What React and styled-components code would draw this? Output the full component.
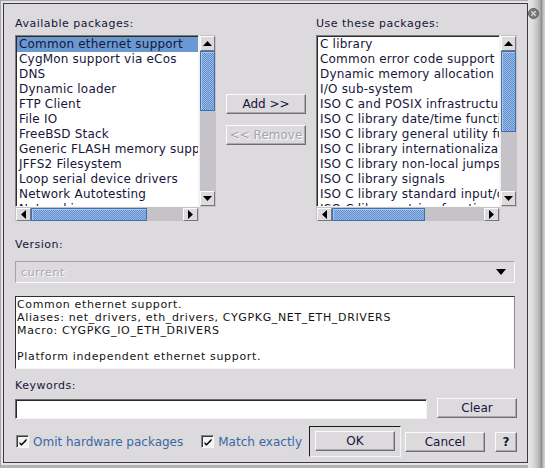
import React from 'react';
import styled, { createGlobalStyle } from 'styled-components';

const BG = '#dcdadd';
const INK = '#16163a';
const SANS = '"DejaVu Sans", "Noto Sans", sans-serif';

const GlobalStyle = createGlobalStyle`
  *, *::before, *::after { box-sizing: border-box; }
  html, body { margin: 0; padding: 0; background: ${BG}; }
  body { width: 545px; height: 468px; overflow: hidden; font-family: ${SANS}; }
`;

const Screen = styled.div`
  display: flex;
  width: 545px;
  height: 468px;
  background: ${BG};
`;

const Frame = styled.div`
  width: 528px;
  height: 468px;
  padding: 2px 0 2px 2px;
  border-top: 1px solid #a9a9ab;
  border-left: 1px solid #a9a9ab;
  border-bottom: 3px solid #b3b2b4;
  background: #e6e4e7;
`;

const Panel = styled.div`
  height: 100%;
  border: 1px solid #3c3c40;
  background: ${BG};
  padding: 13px 10px 0 11px;
  display: flex;
  flex-direction: column;
`;

const TitleStrip = styled.div`
  width: 17px;
  height: 468px;
  padding-top: 8px;
  display: flex;
  flex-direction: column;
  align-items: flex-start;
  background: linear-gradient(to right, #e6e6e6 0px, #dedede 4px, #c6c6c6 9px, #ababab 12px, #8f8f8f 13.5px, #bcbcbc 15px, #d8d8d8 17px);
`;

const TopGrid = styled.div`
  display: grid;
  grid-template-columns: 201px 100px 201px;
`;

const Column = styled.div`
  display: flex;
  flex-direction: column;
`;

const Label = styled.div`
  font-family: ${SANS};
  font-size: 11px;
  line-height: 13px;
  height: 13px;
  letter-spacing: 0.5px;
  color: ${INK};
  white-space: nowrap;
  margin-top: ${p => p.$mt || 0}px;
  margin-bottom: ${p => p.$mb || 0}px;
`;

const ListPanel = styled.div`
  display: grid;
  grid-template-columns: 184px 17px;
  grid-template-rows: 172px 14px;
`;

const ListBox = styled.div`
  background: #fff;
  border: 1px solid;
  border-color: #7d7d7f #f6f6f6 #f6f6f6 #7d7d7f;
  box-shadow: inset 1px 1px 0 #2c2c2c;
  padding: 1px 0 0 1px;
  overflow: hidden;
`;

const Row = styled.div`
  height: 15px;
  line-height: 15px;
  padding-left: 2px;
  font-family: ${SANS};
  font-size: 12px;
  letter-spacing: 0.2px;
  white-space: nowrap;
  overflow: hidden;
  color: ${INK};
  background: ${p => (p.$selected ? '#6a98d0' : 'transparent')};
`;

const VScroll = styled.div`
  display: flex;
  flex-direction: column;
  padding: 1px 1px 1px 0;
  background: #c5c3c7;
  border-left: 1px solid #f0eff1;
`;

const HScroll = styled.div`
  display: flex;
  padding: 1px 1px 0 1px;
  background: #c5c3c7;
`;

const Corner = styled.div`
  background: ${BG};
`;

const ArrowBtn = styled.div`
  flex: 0 0 15px;
  width: 15px;
  height: ${p => (p.$h ? `${p.$h}px` : '15px')};
  display: flex;
  align-items: center;
  justify-content: center;
  background: ${BG};
  border: 1px solid;
  border-color: #fbfbfb #77767a #77767a #fbfbfb;
`;

const Thumb = styled.div`
  flex: 0 0 ${p => p.$size}px;
  background: repeating-conic-gradient(#9bbbe6 0 25%, #5f8fcc 0 50%) 0 0 / 2px 2px;
  border: 1px solid #3f6fae;
  box-shadow: inset 1px 1px 0 #a9c5ec;
`;

const Trough = styled.div`
  flex: 1 1 auto;
`;

const Middle = styled.div`
  display: flex;
  flex-direction: column;
  align-items: center;
  padding-top: 77px;
  gap: 11px;
`;

const Button = styled.button`
  width: ${p => p.$w || 80}px;
  height: 20px;
  padding: 0;
  font-family: ${SANS};
  font-size: 12px;
  font-weight: ${p => (p.$bold ? 700 : 400)};
  color: ${INK};
  background: ${BG};
  border: 1px solid;
  border-color: #fbfbfb #6f6f71 #6f6f71 #fbfbfb;
  box-shadow: inset -1px -1px 0 #aaa9ac;
  cursor: default;
  &:disabled {
    color: #a6a5a8;
    text-shadow: 1px 1px 0 #ffffff;
  }
`;

const Combo = styled.div`
  width: 500px;
  height: 22px;
  margin-top: 10px;
  display: flex;
  align-items: center;
  justify-content: space-between;
  padding: 0 8px 0 5px;
  border: 1px solid;
  border-color: #a4a3a6 #fafafa #fafafa #a4a3a6;
  font-family: ${SANS};
  font-size: 11px;
  letter-spacing: 0.6px;
  color: #a9a8ab;
  text-shadow: 1px 1px 0 #ffffff;
`;

const Desc = styled.div`
  width: 500px;
  height: 73px;
  margin-top: 13px;
  background: #fff;
  border: 1px solid;
  border-color: #2e2e30 #8a898c #f4f4f4 #2e2e30;
  padding: 1px 1px 0;
  font-family: ${SANS};
  font-size: 11px;
  line-height: 13px;
  letter-spacing: 0.65px;
  color: #141414;
  white-space: pre-line;
`;

const InputRow = styled.div`
  display: flex;
  align-items: flex-start;
  gap: 10px;
  margin-top: 6px;
  height: 21px;
`;

const TextInput = styled.div`
  width: 412px;
  height: 20px;
  margin-top: 1px;
  background: #fff;
  border: 1px solid;
  border-color: #6a6a6c #f5f5f5 #f5f5f5 #6a6a6c;
  box-shadow: inset 1px 1px 0 #2a2a2a;
`;

const BottomRow = styled.div`
  display: flex;
  align-items: center;
  margin-top: 7px;
  height: 31px;
`;

const Checks = styled.div`
  display: flex;
  align-items: center;
  gap: 18px;
  margin-left: 1px;
`;

const CheckItem = styled.label`
  display: flex;
  align-items: center;
  gap: 4px;
  font-family: ${SANS};
  font-size: 12px;
  color: #3a68a5;
  white-space: nowrap;
`;

const Box = styled.span`
  width: 13px;
  height: 13px;
  display: flex;
  align-items: center;
  justify-content: center;
  background: #f3f2f4;
  border: 1px solid;
  border-color: #858487 #fbfbfb #fbfbfb #858487;
  box-shadow: inset 1px 1px 0 #3a3a3a;
`;

const Actions = styled.div`
  display: flex;
  align-items: center;
  margin-left: auto;
`;

const DefaultFrame = styled.div`
  width: 92px;
  height: 31px;
  padding: 4px 5px 5px;
  border: 1px solid;
  border-color: #1a1a1a #f6f6f6 #f6f6f6 #1a1a1a;
  display: flex;
  margin-right: 4px;
`;

const Gap = styled.div`
  width: ${p => p.$w}px;
`;

const Tri = ({ dir, w = 9, h = 5 }) => {
  const d = {
    up: `M0 ${h} L${w / 2} 0 L${w} ${h} Z`,
    down: `M0 0 L${w / 2} ${h} L${w} 0 Z`,
  }[dir];
  return (
    <svg width={w} height={h} viewBox={`0 0 ${w} ${h}`}>
      <path d={d} fill="#000" />
    </svg>
  );
};

const HTri = ({ dir }) => (
  <svg width="5" height="9" viewBox="0 0 5 9">
    <path d={dir === 'left' ? 'M5 0 L0 4.5 L5 9 Z' : 'M0 0 L5 4.5 L0 9 Z'} fill="#000" />
  </svg>
);

const CloseIcon = () => (
  <svg width="11" height="11" viewBox="0 0 11 11">
    <circle cx="5.5" cy="5.5" r="5" fill="#7a7a7c" stroke="#5c5c5e" strokeWidth="1" />
    <path d="M3.3 3.3 L7.7 7.7 M7.7 3.3 L3.3 7.7" stroke="#d4d4d6" strokeWidth="1.4" />
  </svg>
);

const CheckMark = () => (
  <svg width="8" height="8" viewBox="0 0 8 8">
    <path d="M0.5 4 L2.5 5.8 L7.5 0.5 L7.5 2.8 L2.5 7.8 L0.5 6 Z" fill="#000" />
  </svg>
);

const ScrolledList = ({ items, selected, vThumb, hThumb }) => (
  <ListPanel>
    <ListBox>
      {items.map((t, i) => (
        <Row key={t} $selected={i === selected}>{t}</Row>
      ))}
    </ListBox>
    <VScroll>
      <ArrowBtn><Tri dir="up" /></ArrowBtn>
      <Thumb $size={vThumb} />
      <Trough />
      <ArrowBtn><Tri dir="down" /></ArrowBtn>
    </VScroll>
    <HScroll>
      <ArrowBtn $h={13}><HTri dir="left" /></ArrowBtn>
      <Thumb $size={hThumb} />
      <Trough />
      <ArrowBtn $h={13}><HTri dir="right" /></ArrowBtn>
    </HScroll>
    <Corner />
  </ListPanel>
);

const available = [
  'Common ethernet support',
  'CygMon support via eCos',
  'DNS',
  'Dynamic loader',
  'FTP Client',
  'File IO',
  'FreeBSD Stack',
  'Generic FLASH memory support',
  'JFFS2 Filesystem',
  'Loop serial device drivers',
  'Network Autotesting',
  'Networking',
];

const used = [
  'C library',
  'Common error code support',
  'Dynamic memory allocation',
  'I/O sub-system',
  'ISO C and POSIX infrastructure',
  'ISO C library date/time functions',
  'ISO C library general utility functions',
  'ISO C library internationalization functions',
  'ISO C library non-local jumps',
  'ISO C library signals',
  'ISO C library standard input/output functions',
  'ISO C library string functions',
];

const description =
  'Common ethernet support.\nAliases: net_drivers, eth_drivers, CYGPKG_NET_ETH_DRIVERS\nMacro: CYGPKG_IO_ETH_DRIVERS\n\nPlatform independent ethernet support.';

export default function App() {
  return (
    <>
      <GlobalStyle />
      <Screen>
        <Frame>
          <Panel>
            <TopGrid>
              <Column>
                <Label $mb={5}>Available packages:</Label>
                <ScrolledList items={available} selected={0} vThumb={60} hThumb={116} />
              </Column>
              <Middle>
                <Button>Add &gt;&gt;</Button>
                <Button disabled>&lt;&lt; Remove</Button>
              </Middle>
              <Column>
                <Label $mb={5}>Use these packages:</Label>
                <ScrolledList items={used} vThumb={81} hThumb={93} />
              </Column>
            </TopGrid>

            <Label $mt={17}>Version:</Label>
            <Combo>
              <span>current</span>
              <Tri dir="down" w={10} h={6} />
            </Combo>

            <Desc>{description}</Desc>

            <Label $mt={10}>Keywords:</Label>
            <InputRow>
              <TextInput />
              <Button>Clear</Button>
            </InputRow>

            <BottomRow>
              <Checks>
                <CheckItem>
                  <Box><CheckMark /></Box>
                  Omit hardware packages
                </CheckItem>
                <CheckItem>
                  <Box><CheckMark /></Box>
                  Match exactly
                </CheckItem>
              </Checks>
              <Actions>
                <DefaultFrame>
                  <Button>OK</Button>
                </DefaultFrame>
                <Button>Cancel</Button>
                <Gap $w={10} />
                <Button $w={22} $bold>?</Button>
              </Actions>
            </BottomRow>
          </Panel>
        </Frame>
        <TitleStrip>
          <CloseIcon />
        </TitleStrip>
      </Screen>
    </>
  );
}
